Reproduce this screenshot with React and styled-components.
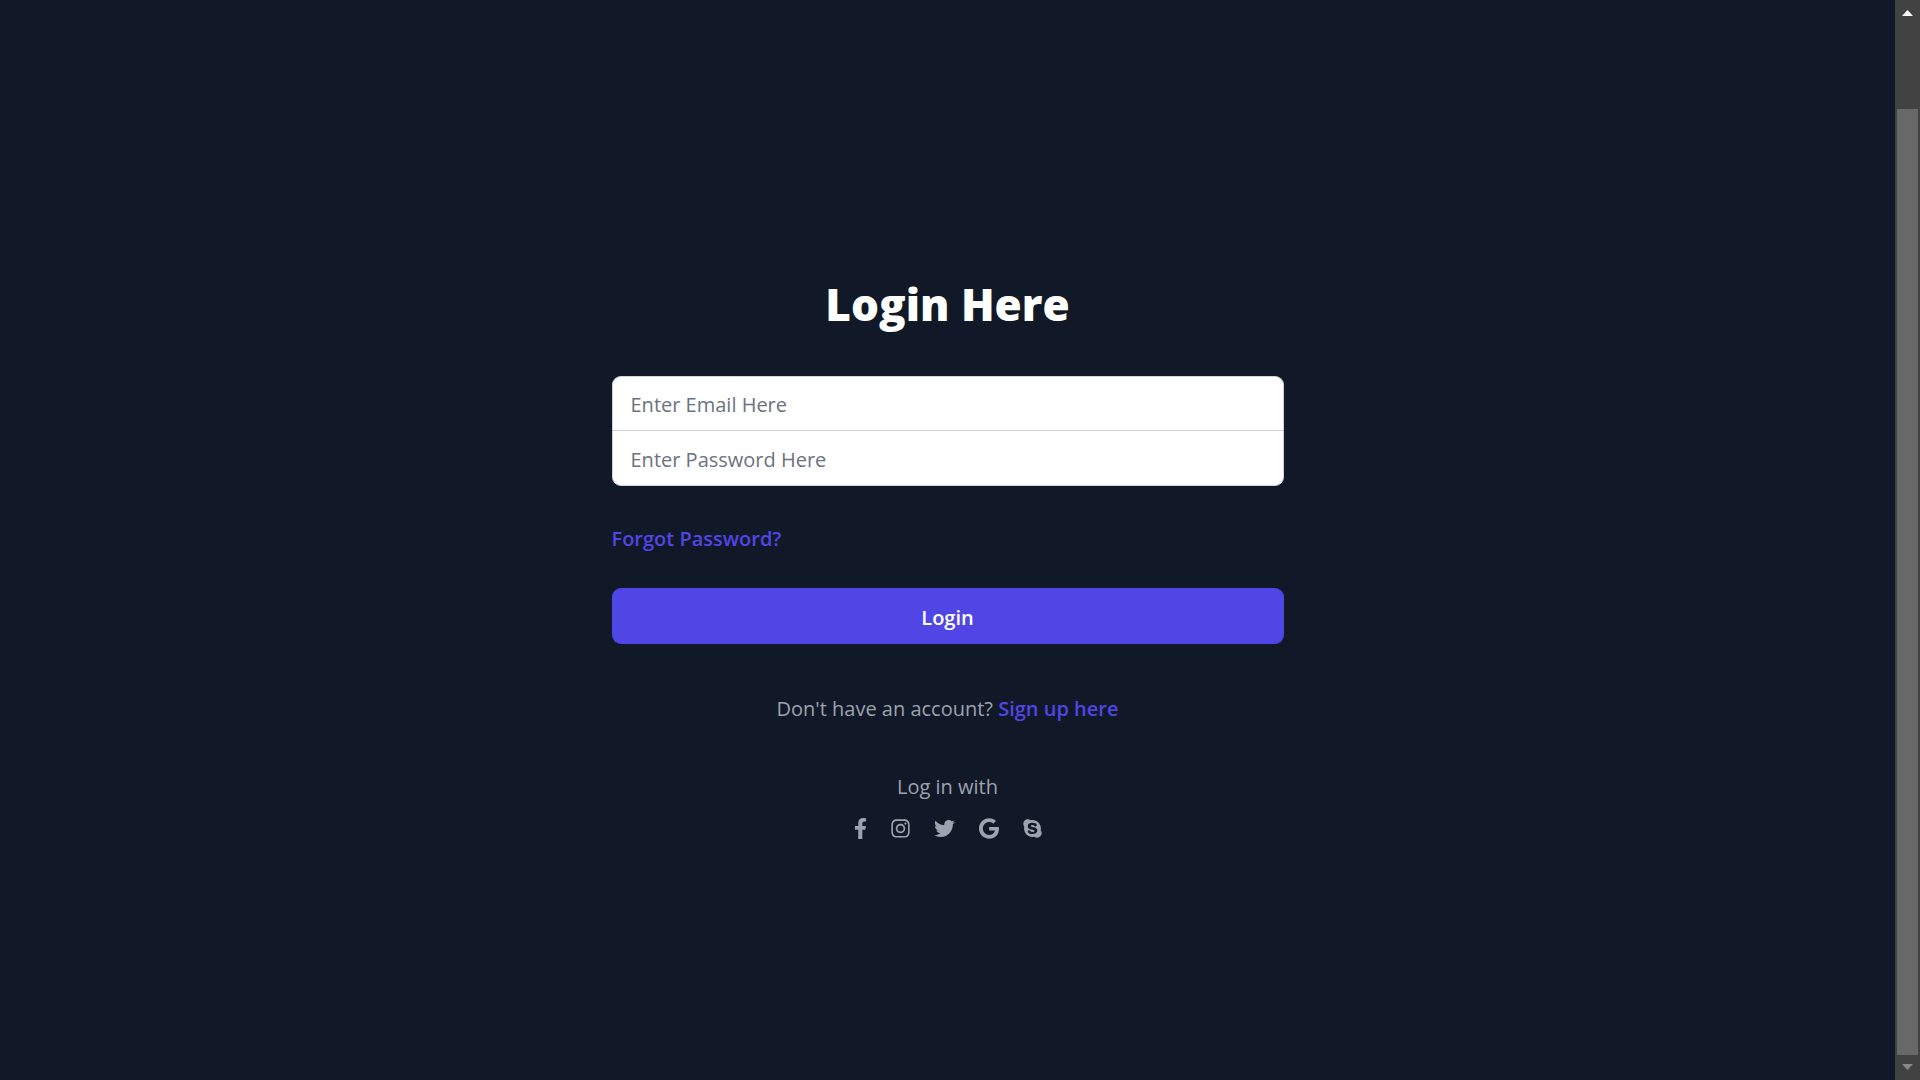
import React from "react";
import styled, { createGlobalStyle } from "styled-components";
import { FaFacebookF, FaInstagram, FaTwitter, FaGoogle, FaSkype } from "react-icons/fa";

const GlobalStyle = createGlobalStyle`
  *, *::before, *::after { box-sizing: border-box; }
  body {
    margin: 0;
    background: #111827;
    font-family: "Open Sans", "Noto Sans", sans-serif;
    font-size: 20px;
    line-height: 30px;
  }
  button, input { font: inherit; }
`;

const Page = styled.div`
  display: grid;
  grid-template-columns: 1fr 25px;
  min-height: 100vh;
`;

const Main = styled.main`
  display: flex;
  justify-content: center;
  align-items: flex-start;
  padding: 274px 24px 0;
`;

const Panel = styled.div`
  width: 100%;
  max-width: 672px;
`;

const Title = styled.h1`
  margin: 0 0 42px;
  color: #fff;
  font-size: 44px;
  font-weight: 800;
  line-height: 60px;
  text-align: center;
`;

const Form = styled.form`
  margin-bottom: 50px;
`;

const Fields = styled.div`
  display: flex;
  flex-direction: column;
`;

const Field = styled.input`
  width: 100%;
  height: ${(p) => (p.$last ? "56px" : "54px")};
  padding: 2px 18px 0;
  border: 1px solid #d1d5db;
  border-bottom-width: ${(p) => (p.$last ? "1px" : "0")};
  border-radius: ${(p) => (p.$last ? "0 0 9px 9px" : "9px 9px 0 0")};
  background: #fff;
  color: #111827;
  outline: none;
  &::placeholder { color: #6b7280; opacity: 1; }
`;

const TextLink = styled.a`
  color: #4f46e5;
  font-weight: 600;
  text-decoration: none;
`;

const Forgot = styled.p`
  margin: 38px 0 34px;
`;

const Submit = styled.button`
  display: block;
  width: 100%;
  height: 56px;
  padding: 4px 24px 0;
  border: 0;
  border-radius: 9px;
  background: #4f46e5;
  color: #fff;
  font-weight: 600;
`;

const Note = styled.p`
  margin: 0 0 48px;
  color: #9ca3af;
  text-align: center;
  &:last-of-type { margin-bottom: 16px; }
`;

const Socials = styled.nav`
  display: flex;
  justify-content: center;
  gap: 24px;
`;

const SocialLink = styled.a`
  display: flex;
  color: #9ca3af;
  svg { width: ${(p) => p.$width}px; height: 21px; }
`;

const Scroller = styled.aside`
  display: flex;
  flex-direction: column;
  align-items: center;
  background: #424242;
`;

const Arrow = styled.svg`
  width: 11px;
  height: 6px;
  margin: ${(p) => (p.$down ? "9px 0 10px" : "10px 0 93px")};
  fill: ${(p) => (p.$down ? "#888" : "#fff")};
`;

const Thumb = styled.div`
  flex: 1;
  width: 21px;
  background: #686868;
`;

const socials = [
  { name: "Facebook", Icon: FaFacebookF, width: 13 },
  { name: "Instagram", Icon: FaInstagram, width: 19 },
  { name: "Twitter", Icon: FaTwitter, width: 21 },
  { name: "Google", Icon: FaGoogle, width: 20 },
  { name: "Skype", Icon: FaSkype, width: 19 },
];

export default function App() {
  return (
    <>
      <GlobalStyle />
      <Page>
        <Main>
          <Panel>
            <Title>Login Here</Title>
            <Form onSubmit={(e) => e.preventDefault()}>
              <Fields>
                <Field type="email" aria-label="Email" placeholder="Enter Email Here" />
                <Field type="password" aria-label="Password" placeholder="Enter Password Here" $last />
              </Fields>
              <Forgot>
                <TextLink href="#forgot">Forgot Password?</TextLink>
              </Forgot>
              <Submit type="submit">Login</Submit>
            </Form>
            <Note>
              Don't have an account? <TextLink href="#signup">Sign up here</TextLink>
            </Note>
            <Note>Log in with</Note>
            <Socials aria-label="Social login">
              {socials.map(({ name, Icon, width }) => (
                <SocialLink key={name} href={`#${name.toLowerCase()}`} aria-label={name} $width={width}>
                  <Icon />
                </SocialLink>
              ))}
            </Socials>
          </Panel>
        </Main>
        <Scroller aria-hidden="true">
          <Arrow viewBox="0 0 11 6"><path d="M5.5 0 11 6H0z" /></Arrow>
          <Thumb />
          <Arrow viewBox="0 0 11 6" $down><path d="M0 0h11L5.5 6z" /></Arrow>
        </Scroller>
      </Page>
    </>
  );
}
